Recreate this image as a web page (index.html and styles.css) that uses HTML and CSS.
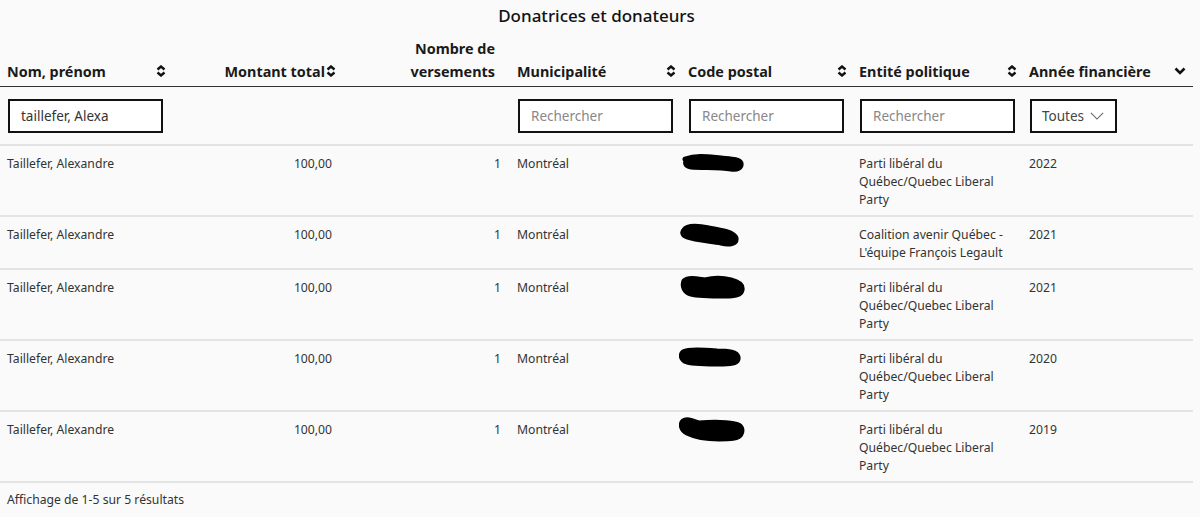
FILE: index.html
```html
<!DOCTYPE html>
<html lang="fr">
<head>
<meta charset="utf-8">
<title>Donatrices et donateurs</title>
<link rel="stylesheet" href="styles.css">
</head>
<body>
<div class="page">
  <h1 class="title">Donatrices et donateurs</h1>
  <table class="grid">
    <colgroup>
      <col class="c1"><col class="c2"><col class="c3"><col class="c4"><col class="c5"><col class="c6"><col class="c7">
    </colgroup>
    <thead>
      <tr class="head">
        <th><div class="th split"><span>Nom, prénom</span><svg class="sort" viewBox="0 0 10 12"><path d="M1.5 4.5 L5 1.5 L8.5 4.5 M1.5 7.5 L5 10.5 L8.5 7.5"/></svg></div></th>
        <th><div class="th end"><span>Montant total</span><svg class="sort tight" viewBox="0 0 10 12"><path d="M1.5 4.5 L5 1.5 L8.5 4.5 M1.5 7.5 L5 10.5 L8.5 7.5"/></svg></div></th>
        <th><div class="th end pad"><span>Nombre de<br>versements</span></div></th>
        <th><div class="th split"><span>Municipalité</span><svg class="sort" viewBox="0 0 10 12"><path d="M1.5 4.5 L5 1.5 L8.5 4.5 M1.5 7.5 L5 10.5 L8.5 7.5"/></svg></div></th>
        <th><div class="th split"><span>Code postal</span><svg class="sort" viewBox="0 0 10 12"><path d="M1.5 4.5 L5 1.5 L8.5 4.5 M1.5 7.5 L5 10.5 L8.5 7.5"/></svg></div></th>
        <th><div class="th split"><span>Entité politique</span><svg class="sort" viewBox="0 0 10 12"><path d="M1.5 4.5 L5 1.5 L8.5 4.5 M1.5 7.5 L5 10.5 L8.5 7.5"/></svg></div></th>
        <th><div class="th split"><span>Année financière</span><svg class="chev" viewBox="0 0 12 8"><path d="M1.5 1.5 L6 6 L10.5 1.5"/></svg></div></th>
      </tr>
      <tr class="filters">
        <td><div class="field filled">taillefer, Alexa</div></td>
        <td></td>
        <td></td>
        <td><div class="field">Rechercher</div></td>
        <td><div class="field">Rechercher</div></td>
        <td><div class="field">Rechercher</div></td>
        <td><div class="select">Toutes<svg class="sel-chev" viewBox="0 0 16 9"><path d="M1 1 L8 8 L15 1"/></svg></div></td>
      </tr>
    </thead>
    <tbody>
      <tr>
        <td>Taillefer, Alexandre</td>
        <td class="num">100,00</td>
        <td class="num">1</td>
        <td>Montréal</td>
        <td class="hide"><svg class="blot" viewBox="0 0 70 30"><path d="M6 8 C18 4 30 6 42 7 C52 8 60 8 62 12 C63 17 58 19 52 18 C40 16 24 17 12 16 C6 15 5 11 9 9 Z"/></svg></td>
        <td class="party">Parti libéral du Québec/Quebec Liberal Party</td>
        <td>2022</td>
      </tr>
      <tr>
        <td>Taillefer, Alexandre</td>
        <td class="num">100,00</td>
        <td class="num">1</td>
        <td>Montréal</td>
        <td class="hide"><svg class="blot" viewBox="0 0 70 30"><path d="M5 8 C8 3 20 4 30 6 C42 8 55 10 57 16 C58 22 50 23 42 21 C30 19 16 18 8 15 C3 13 3 10 5 8 Z"/></svg></td>
        <td class="party">Coalition avenir Québec - L'équipe François Legault</td>
        <td>2021</td>
      </tr>
      <tr>
        <td>Taillefer, Alexandre</td>
        <td class="num">100,00</td>
        <td class="num">1</td>
        <td>Montréal</td>
        <td class="hide"><svg class="blot" viewBox="0 0 70 30"><path d="M5 6 C10 2 18 4 26 5 C34 3 44 3 52 5 C60 7 64 10 63 15 C62 20 56 21 46 21 C34 21 20 21 12 19 C5 17 3 11 5 6 Z"/></svg></td>
        <td class="party">Parti libéral du Québec/Quebec Liberal Party</td>
        <td>2021</td>
      </tr>
      <tr>
        <td>Taillefer, Alexandre</td>
        <td class="num">100,00</td>
        <td class="num">1</td>
        <td>Montréal</td>
        <td class="hide"><svg class="blot" viewBox="0 0 70 30"><path d="M4 6 C10 3 24 4 38 5 C50 5 58 6 59 11 C60 17 54 18 44 18 C30 18 16 18 8 16 C2 14 1 9 4 6 Z"/></svg></td>
        <td class="party">Parti libéral du Québec/Quebec Liberal Party</td>
        <td>2020</td>
      </tr>
      <tr>
        <td>Taillefer, Alexandre</td>
        <td class="num">100,00</td>
        <td class="num">1</td>
        <td>Montréal</td>
        <td class="hide"><svg class="blot" viewBox="0 0 70 30"><path d="M4 4 C8 1 14 4 20 6 C32 5 46 5 56 7 C63 8 64 13 62 17 C60 22 50 22 40 22 C28 22 16 20 8 16 C2 13 1 7 4 4 Z"/></svg></td>
        <td class="party">Parti libéral du Québec/Quebec Liberal Party</td>
        <td>2019</td>
      </tr>
    </tbody>
  </table>
  <p class="summary">Affichage de 1-5 sur 5 résultats</p>
</div>
</body>
</html>
```
FILE: styles.css
```css
* { box-sizing: border-box; }
html, body { margin: 0; padding: 0; background: #fafafa; }
body {
  font-family: "Noto Sans", "Open Sans", sans-serif;
  color: #222;
  width: 1200px;
  height: 517px;
  overflow: hidden;
}
.page { width: 1193px; }
.title {
  margin: 0;
  padding-top: 4px;
  height: 37px;
  text-align: center;
  font-size: 17px;
  font-weight: 500;
  line-height: 24px;
  color: #111;
}
.grid {
  width: 1193px;
  table-layout: fixed;
  border-collapse: collapse;
}
.c1 { width: 171px; }
.c2 { width: 170px; }
.c3 { width: 169px; }
.c4 { width: 171px; }
.c5 { width: 171px; }
.c6 { width: 170px; }
.c7 { width: 171px; }

.head th {
  vertical-align: bottom;
  padding: 0 0 3px 7px;
  border-bottom: 1.5px solid #333;
  font-size: 14.4px;
  font-weight: 700;
  color: #1a1a1a;
  text-align: left;
}
.th {
  display: flex;
  align-items: flex-end;
  line-height: 23px;
}
.th span { white-space: nowrap; }
.th.split { justify-content: space-between; padding-right: 5px; }
.th.end { justify-content: flex-end; padding-right: 5px; }
.th.pad { padding-right: 15px; text-align: right; }
.sort {
  width: 10px;
  height: 12px;
  margin-bottom: 6px;
  fill: none;
  stroke: #111;
  stroke-width: 2.4;
}
.sort.tight { margin-left: 1px; }
.chev {
  width: 12px;
  height: 8px;
  margin-bottom: 8px;
  margin-right: 2px;
  fill: none;
  stroke: #111;
  stroke-width: 2.6;
}

.filters td {
  padding: 12px 0 11px 8px;
  border-bottom: 2px solid #e2e2e2;
  vertical-align: top;
}
.field {
  width: 155px;
  height: 34px;
  border: 2px solid #111;
  background: #fff;
  padding-left: 11px;
  font-size: 13.5px;
  line-height: 30px;
  color: #888;
}
.field.filled { color: #333; }
.select {
  width: 87px;
  height: 34px;
  border: 2px solid #111;
  background: #fff;
  padding-left: 10px;
  font-size: 13.5px;
  line-height: 30px;
  color: #444;
  display: flex;
  align-items: center;
  gap: 6px;
}
.sel-chev {
  width: 14px;
  height: 8px;
  fill: none;
  stroke: #666;
  stroke-width: 1.3;
}

tbody td {
  vertical-align: top;
  padding: 9px 8px 6px 7px;
  font-size: 12.2px;
  line-height: 18px;
  color: #333;
  border-bottom: 2px solid #e4e4e4;
}
tbody td.num { text-align: right; padding-right: 9px; }
tbody td.party { padding-right: 6px; }
tbody td.hide { padding: 5px 0 0 0; }
.blot {
  display: block;
  width: 70px;
  height: 30px;
  margin-left: -2px;
  fill: #000;
  stroke: #000;
  stroke-width: 5;
  stroke-linejoin: round;
}

.summary {
  margin: 0;
  padding: 8px 0 0 7px;
  font-size: 12.2px;
  line-height: 18px;
  color: #333;
}
```
